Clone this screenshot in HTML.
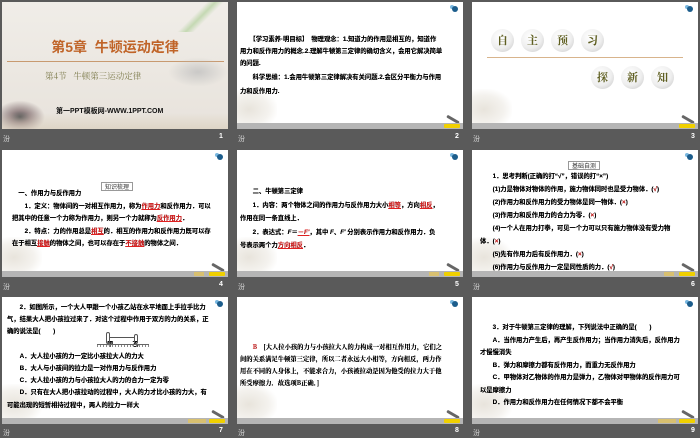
<!DOCTYPE html>
<html><head><meta charset="utf-8"><style>
*{margin:0;padding:0;box-sizing:border-box}
body{width:700px;height:438px;background:#5a5a5a;position:relative;overflow:hidden;font-family:"Liberation Serif","Noto Serif CJK SC",serif}
.s{position:absolute;width:226px;height:127px;background:#fff;overflow:hidden}
.bar{position:absolute;left:0;right:0;bottom:0;height:6px;background:#b5b5b5}
.btn{position:absolute;bottom:1px;height:4px;background:#f0d000;width:16px;right:3px;border-radius:1px}
.btn2{position:absolute;bottom:1px;height:4px;background:#d8c070;width:10px;right:24px}
.ic{position:absolute;right:5px;top:4px;width:6px;height:6px;border-radius:50%;background:#1c5d8c;box-shadow:-3px -2px 0 -1px #7ab8e0}
.pen{position:absolute;right:3px;bottom:8px;width:14px;height:3px;background:#666;transform:rotate(30deg);border-radius:2px}
.fl{position:absolute;left:0;bottom:6px;width:40px;height:34px;background:radial-gradient(ellipse at 30% 60%,#e8e4dc 0,#f4f2ee 50%,rgba(255,255,255,0) 75%)}
.cap{position:absolute;color:#ddd;font-size:7px;font-family:"Liberation Sans","Noto Sans CJK SC",sans-serif}
.num{position:absolute;color:#fff;font-size:7px;font-weight:bold;font-family:"Liberation Sans",sans-serif}
.t{position:absolute;font-size:6.3px;line-height:12px;font-weight:bold;color:#000;font-family:"Liberation Sans","Noto Sans CJK SC",sans-serif;white-space:nowrap;text-shadow:0 0 .3px #000}
.r{color:#e02020;text-decoration:underline}
.hd{position:absolute;font-size:6px;border:1px solid #999;padding:0 3px;line-height:7px;color:#333;font-family:"Noto Sans CJK SC",sans-serif}
.ball{position:absolute;width:23px;height:23px;border-radius:50%;background:radial-gradient(circle at 40% 35%,#fff 0,#eee 55%,#c4c4c4 100%);color:#5e5e20;font-size:11px;font-weight:bold;text-align:center;line-height:23px;font-family:"Noto Serif CJK SC",serif}
</style></head><body>

<!-- slide 1 -->
<div class="s" style="left:2px;top:2px;background:linear-gradient(#f0ede8,#e8e3dc)">
<div style="position:absolute;right:0;top:0;width:55px;height:30px;background:linear-gradient(135deg,transparent 40%,#a8cc90 50%,transparent 60%);opacity:.6"></div>
<div style="position:absolute;left:0;top:35px;width:226px;text-align:center;font-size:14px;font-weight:bold;color:#c06428;font-family:'Liberation Sans','Noto Sans CJK SC',sans-serif">第5章&nbsp;&nbsp;牛顿运动定律</div>
<div style="position:absolute;left:5px;top:59px;width:217px;height:1px;background:#c89a70"></div>
<div style="position:absolute;left:43px;top:68px;font-size:8.5px;color:#7c7a4a;font-family:'Noto Serif CJK SC',serif">第4节&nbsp;&nbsp;&nbsp;牛顿第三运动定律</div>
<div style="position:absolute;right:0;top:55px;width:60px;height:30px;background:radial-gradient(ellipse,#bbb 0,rgba(200,200,200,0) 70%);opacity:.7"></div>
<div style="position:absolute;left:0;bottom:0;width:45px;height:30px;background:radial-gradient(ellipse at 40% 60%,#555 0,#9a8a8a 25%,rgba(230,220,220,0) 65%)"></div>
<div style="position:absolute;left:0;right:0;bottom:0;height:16px;background:linear-gradient(rgba(220,210,190,0),#d8ccb8);opacity:.6"></div>
<div style="position:absolute;left:54px;top:104px;font-size:7px;font-weight:bold;color:#111;font-family:'Liberation Sans','Noto Sans CJK SC',sans-serif">第一PPT模板网-WWW.1PPT.COM</div>
</div>
<div class="cap" style="left:3px;top:134px">汾</div><div class="num" style="left:219px;top:133px">1</div>

<!-- slide 2 -->
<div class="s" style="left:237px;top:2px"><div class="ic"></div><div class="fl"></div><div class="pen"></div><div class="bar"></div><div class="btn"></div>
<div class="t" style="left:3px;top:32px">　　【学习素养·明目标】　物理观念：1.知道力的作用是相互的，知道作<br>用力和反作用力的概念.2.理解牛顿第三定律的确切含义，会用它解决简单<br>的问题.<br><span style="line-height:16px">　　科学思维：1.会用牛顿第三定律解决有关问题.2.会区分平衡力与作用</span><br>力和反作用力.</div>
</div>
<div class="cap" style="left:238px;top:134px">汾</div><div class="num" style="left:455px;top:133px">2</div>

<!-- slide 3 -->
<div class="s" style="left:472px;top:2px"><div class="ic"></div><div class="fl"></div><div class="pen"></div><div class="bar"></div><div class="btn"></div>
<div class="ball" style="left:19px;top:27px">自</div><div class="ball" style="left:49px;top:27px">主</div><div class="ball" style="left:79px;top:27px">预</div><div class="ball" style="left:109px;top:27px">习</div>
<div style="position:absolute;left:15px;top:55px;width:196px;height:1px;background:#d8b48c"></div>
<div class="ball" style="left:119px;top:64px">探</div><div class="ball" style="left:149px;top:64px">新</div><div class="ball" style="left:179px;top:64px">知</div>
</div>
<div class="cap" style="left:473px;top:134px">汾</div><div class="num" style="left:691px;top:133px">3</div>

<!-- slide 4 -->
<div class="s" style="left:2px;top:150px"><div class="ic"></div><div class="fl"></div><div class="pen"></div><div class="bar"></div><div class="btn"></div><div class="btn2"></div>
<div class="hd" style="left:99px;top:32px">知识梳理</div>
<div class="t" style="left:10px;top:38px;line-height:12.5px">　一、作用力与反作用力<br>　　1．定义：物体间的一对相互作用力，称为<span class="r">作用力</span>和反作用力．可以<br>把其中的任意一个力称为作用力，则另一个力就称为<span class="r">反作用力</span>．<br>　　2．特点：力的作用总是<span class="r">相互</span>的．相互的作用力和反作用力既可以存<br>在于相互<span class="r">接触</span>的物体之间，也可以存在于<span class="r">不接触</span>的物体之间．</div>
</div>
<div class="cap" style="left:3px;top:282px">汾</div><div class="num" style="left:219px;top:281px">4</div>

<!-- slide 5 -->
<div class="s" style="left:237px;top:150px"><div class="ic"></div><div class="fl"></div><div class="pen"></div><div class="bar"></div><div class="btn"></div><div class="btn2"></div>
<div class="t" style="left:3px;top:35px;line-height:13.5px">　　二、牛顿第三定律<br>　　1．内容：两个物体之间的作用力与反作用力大小<span class="r">相等</span>，方向<span class="r">相反</span>，<br>作用在同一条直线上．<br>　　2．表达式：<i>F</i>＝<span class="r">－<i>F′</i></span>，其中 <i>F</i>、<i>F′</i> 分别表示作用力和反作用力．负<br>号表示两个力<span class="r">方向相反</span>．</div>
</div>
<div class="cap" style="left:238px;top:282px">汾</div><div class="num" style="left:455px;top:281px">5</div>

<!-- slide 6 -->
<div class="s" style="left:472px;top:150px"><div class="ic"></div><div class="fl"></div><div class="pen"></div><div class="bar"></div><div class="btn"></div><div class="btn2"></div>
<div class="hd" style="left:96px;top:11px">基础自测</div>
<div class="t" style="left:8px;top:20px;line-height:13px">　　1．思考判断(正确的打“√”，错误的打“×”)<br>　　(1)力是物体对物体的作用，施力物体同时也是受力物体．(<span style="color:#e02020">√</span>)<br>　　(2)作用力和反作用力的受力物体是同一物体．(<span style="color:#e02020">×</span>)<br>　　(3)作用力和反作用力的合力为零．(<span style="color:#e02020">×</span>)<br>　　(4)一个人在用力打拳，可见一个力可以只有施力物体没有受力物<br>体．(<span style="color:#e02020">×</span>)<br>　　(5)先有作用力后有反作用力．(<span style="color:#e02020">×</span>)<br>　　(6)作用力与反作用力一定是同性质的力．(<span style="color:#e02020">√</span>)</div>
</div>
<div class="cap" style="left:473px;top:282px">汾</div><div class="num" style="left:691px;top:281px">6</div>

<!-- slide 7 -->
<div class="s" style="left:2px;top:297px"><div class="ic"></div><div class="fl"></div><div class="pen"></div><div class="bar"></div><div class="btn"></div><div class="btn2" style="width:18px;right:22px"></div>
<div class="t" style="left:5px;top:5px;line-height:12.2px">　　2．如图所示，一个大人甲跟一个小孩乙站在水平地面上手拉手比力<br>气，结果大人把小孩拉过来了．对这个过程中作用于双方的力的关系，正<br>确的说法是(　　)<br><span style="margin-left:100px">甲　　　乙</span><br>　　A．大人拉小孩的力一定比小孩拉大人的力大<br>　　B．大人与小孩间的拉力是一对作用力与反作用力<br>　　C．大人拉小孩的力与小孩拉大人的力的合力一定为零<br>　　D．只有在大人把小孩拉动的过程中，大人的力才比小孩的力大，有<br>可能出现的短暂相持过程中，两人的拉力一样大</div>
<div style="position:absolute;left:95px;top:47px;width:52px;height:3px;border-top:1px solid #666;background:repeating-linear-gradient(90deg,#888 0 1px,transparent 1px 3px)"></div>
<div style="position:absolute;left:104px;top:35px;width:4px;height:12px;border:1px solid #555;border-radius:2px"></div>
<div style="position:absolute;left:132px;top:37px;width:4px;height:10px;border:1px solid #555;border-radius:2px"></div>
<div style="position:absolute;left:108px;top:40px;width:24px;height:1px;background:#555"></div>
</div>
<div class="cap" style="left:3px;top:428px">汾</div><div class="num" style="left:219px;top:427px">7</div>

<!-- slide 8 -->
<div class="s" style="left:237px;top:297px"><div class="ic"></div><div class="fl"></div><div class="pen"></div><div class="bar"></div><div class="btn"></div>
<div class="t" style="left:3px;top:44px;line-height:12px;font-family:'Noto Serif CJK SC',serif">　　<span style="color:#e02020">B</span>　[大人拉小孩的力与小孩拉大人的力构成一对相互作用力，它们之<br>间的关系满足牛顿第三定律，所以二者永远大小相等，方向相反，两力作<br>用在不同的人身体上，不能求合力，小孩被拉动是因为他受的拉力大于他<br>所受摩擦力．故选项B正确．]</div>
</div>
<div class="cap" style="left:238px;top:428px">汾</div><div class="num" style="left:455px;top:427px">8</div>

<!-- slide 9 -->
<div class="s" style="left:472px;top:297px"><div class="ic"></div><div class="fl"></div><div class="pen"></div><div class="bar"></div><div class="btn"></div><div class="btn2" style="width:18px;right:22px"></div>
<div class="t" style="left:8px;top:25px;line-height:12.5px">　　3．对于牛顿第三定律的理解，下列说法中正确的是(　　)<br>　　A．当作用力产生后，再产生反作用力；当作用力消失后，反作用力<br>才慢慢消失<br>　　B．弹力和摩擦力都有反作用力，而重力无反作用力<br>　　C．甲物体对乙物体的作用力是弹力，乙物体对甲物体的反作用力可<br>以是摩擦力<br>　　D．作用力和反作用力在任何情况下都不会平衡</div>
</div>
<div class="cap" style="left:473px;top:428px">汾</div><div class="num" style="left:691px;top:427px">9</div>

</body></html>
